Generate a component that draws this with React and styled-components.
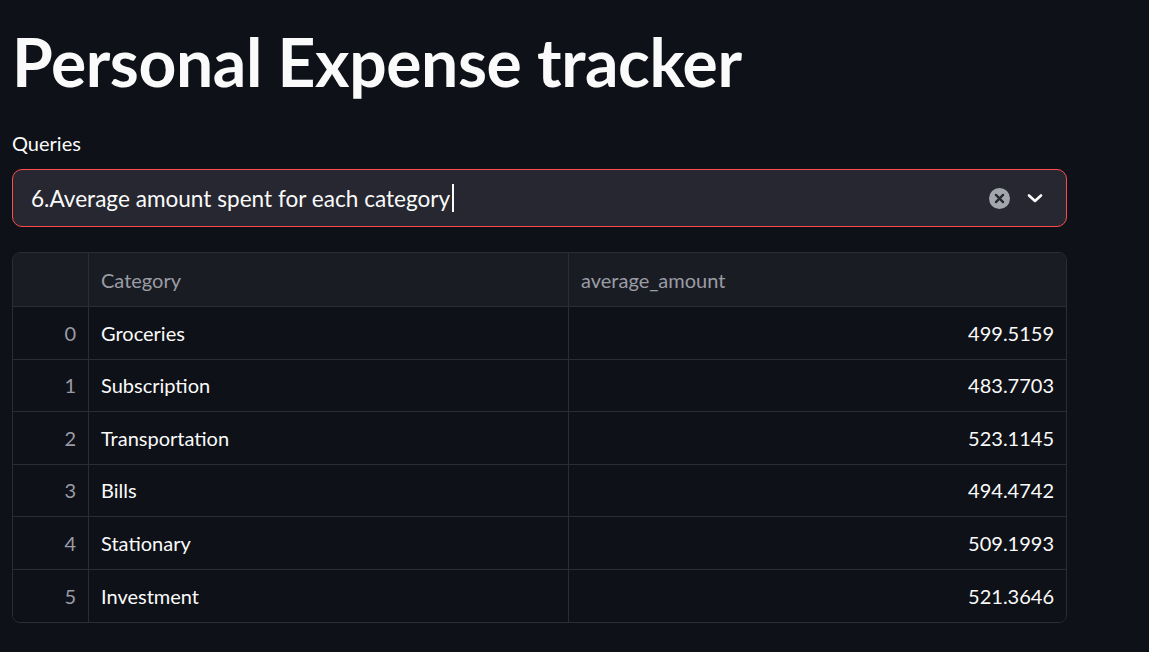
import React from "react";
import styled, { createGlobalStyle } from "styled-components";

const GlobalStyle = createGlobalStyle`
  html, body {
    margin: 0;
    padding: 0;
    background: #0e1117;
  }
  body {
    font-family: Lato, "Noto Sans", sans-serif;
    color: #fafafa;
  }
`;

const Page = styled.div`
  width: 1149px;
  height: 652px;
  box-sizing: border-box;
  padding: 22px 82px 0 12px;
  background: #0e1117;
  overflow: hidden;
`;

const Title = styled.h1`
  margin: 0;
  font-size: 66px;
  font-weight: 700;
  line-height: 80px;
  letter-spacing: -0.4px;
  color: #fafafa;
`;

const Label = styled.div`
  margin-top: 28px;
  font-size: 20px;
  line-height: 26px;
  color: #fafafa;
`;

const Select = styled.div`
  margin-top: 13px;
  height: 58px;
  box-sizing: border-box;
  display: flex;
  align-items: center;
  padding: 0 18px;
  background: #262730;
  border: 1px solid #ff4b4b;
  border-radius: 10px;
`;

const SelectValue = styled.div`
  flex: 1;
  font-size: 22.6px;
  display: flex;
  align-items: center;
  color: #fafafa;
`;

const Caret = styled.span`
  display: inline-block;
  width: 2px;
  height: 28px;
  margin-left: 2px;
  background: #fafafa;
`;

const Icons = styled.div`
  display: flex;
  align-items: center;
  gap: 16px;
  padding-right: 4px;
`;

const Table = styled.div`
  margin-top: 25px;
  border: 1px solid #2a2d35;
  border-radius: 8px;
  overflow: hidden;
  display: grid;
  grid-template-columns: 76px 480px 1fr;
`;

const Cell = styled.div`
  height: ${({ head }) => (head ? "54px" : "52.5px")};
  box-sizing: border-box;
  display: flex;
  align-items: center;
  padding: 0 12px;
  font-size: 20px;
  border-bottom: ${({ last }) => (last ? "none" : "1px solid #2a2d35")};
  border-right: ${({ end }) => (end ? "none" : "1px solid #2a2d35")};
  background: ${({ head }) => (head ? "#1a1c24" : "#0e1117")};
  color: ${({ muted }) => (muted ? "#9a9ca4" : "#fafafa")};
  justify-content: ${({ right }) => (right ? "flex-end" : "flex-start")};
`;

const rows = [
  ["Groceries", "499.5159"],
  ["Subscription", "483.7703"],
  ["Transportation", "523.1145"],
  ["Bills", "494.4742"],
  ["Stationary", "509.1993"],
  ["Investment", "521.3646"],
];

function ClearIcon() {
  return (
    <svg width="21" height="21" viewBox="0 0 20 20">
      <circle cx="10" cy="10" r="10" fill="#a3a6ad" />
      <path d="M6.6 6.6 L13.4 13.4 M13.4 6.6 L6.6 13.4" stroke="#262730" strokeWidth="2.2" strokeLinecap="round" />
    </svg>
  );
}

function Chevron() {
  return (
    <svg width="18" height="18" viewBox="0 0 18 18">
      <path d="M3 6.5 L9 12 L15 6.5" stroke="#fafafa" strokeWidth="2.6" fill="none" strokeLinecap="round" strokeLinejoin="round" />
    </svg>
  );
}

export default function App() {
  return (
    <Page>
      <GlobalStyle />
      <Title>Personal Expense tracker</Title>
      <Label>Queries</Label>
      <Select>
        <SelectValue>
          6.Average amount spent for each category
          <Caret />
        </SelectValue>
        <Icons>
          <ClearIcon />
          <Chevron />
        </Icons>
      </Select>
      <Table>
        <Cell head muted />
        <Cell head muted>Category</Cell>
        <Cell head muted end>average_amount</Cell>
        {rows.map(([cat, amt], i) => {
          const last = i === rows.length - 1;
          return (
            <React.Fragment key={cat}>
              <Cell muted right last={last}>{i}</Cell>
              <Cell last={last}>{cat}</Cell>
              <Cell right end last={last}>{amt}</Cell>
            </React.Fragment>
          );
        })}
      </Table>
    </Page>
  );
}
